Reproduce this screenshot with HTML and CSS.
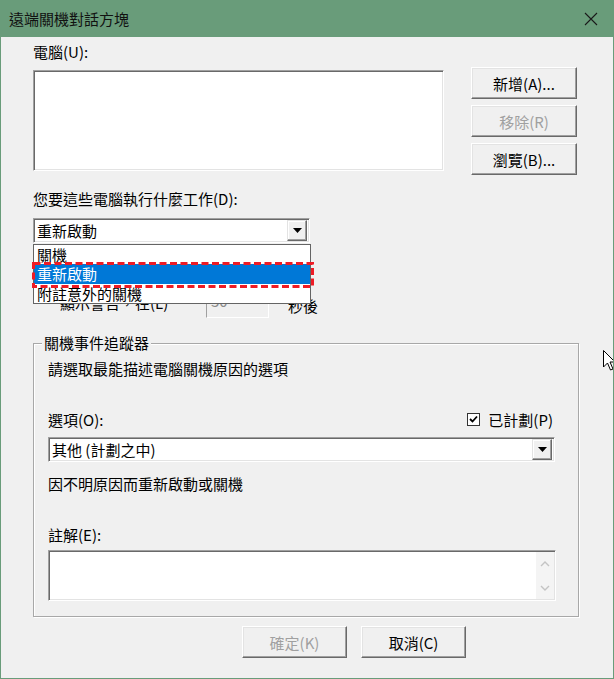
FILE: index.html
```html
<!DOCTYPE html>
<html lang="zh-Hant">
<head>
<meta charset="utf-8">
<title>遠端關機對話方塊</title>
<link rel="stylesheet" href="styles.css">
</head>
<body>
<div class="window">
  <div class="titlebar">
    <span class="title">遠端關機對話方塊</span>
    <svg class="close" width="14" height="14" viewBox="0 0 14 14"><path d="M1 1 L13 13 M13 1 L1 13" stroke="#1a1a1a" stroke-width="1.1" fill="none"/></svg>
  </div>
  <div class="content">
    <div class="label">電腦(U):</div>
    <div class="computers">
      <div class="listbox"></div>
      <div class="side-buttons">
        <button class="btn">新增(A)...</button>
        <button class="btn disabled">移除(R)</button>
        <button class="btn">瀏覽(B)...</button>
      </div>
    </div>
    <div class="label action-label">您要這些電腦執行什麼工作(D):</div>
    <div class="combo action-combo">
      <span class="combo-text">重新啟動</span>
      <span class="combo-arrow"><svg width="9" height="5" viewBox="0 0 9 5"><path d="M0 0 H9 L4.5 5 Z" fill="#000"/></svg></span>
    </div>
    <div class="warn-row">
      <span class="warn-text">顯示警告，在(L)</span>
      <div class="num-field">30</div>
      <span class="warn-unit">秒後</span>
    </div>
    <div class="group">
      <span class="group-title">關機事件追蹤器</span>
      <div class="desc">請選取最能描述電腦關機原因的選項</div>
      <div class="option-row">
        <span>選項(O):</span>
        <span class="check">
          <span class="checkbox"><svg width="9" height="9" viewBox="0 0 9 9"><path d="M1 4 L3.5 6.5 L8 1.5" stroke="#000" stroke-width="1.8" fill="none"/></svg></span>
          已計劃(P)
        </span>
      </div>
      <div class="combo reason-combo">
        <span class="combo-text">其他 (計劃之中)</span>
        <span class="combo-arrow"><svg width="9" height="5" viewBox="0 0 9 5"><path d="M0 0 H9 L4.5 5 Z" fill="#000"/></svg></span>
      </div>
      <div class="reason-desc">因不明原因而重新啟動或關機</div>
      <div class="label comment-label">註解(E):</div>
      <div class="textarea">
        <div class="text-area-body"></div>
        <div class="scrollbar">
          <svg width="10" height="6" viewBox="0 0 10 6"><path d="M1 5 L5 1 L9 5" stroke="#c4c4c4" stroke-width="1.4" fill="none"/></svg>
          <svg width="10" height="6" viewBox="0 0 10 6"><path d="M1 1 L5 5 L9 1" stroke="#c4c4c4" stroke-width="1.4" fill="none"/></svg>
        </div>
      </div>
    </div>
    <div class="footer">
      <button class="btn disabled">確定(K)</button>
      <button class="btn">取消(C)</button>
    </div>
  </div>

  <div class="dropdown">
    <div class="item">關機</div>
    <div class="item selected">重新啟動</div>
    <div class="item">附註意外的關機</div>
  </div>
  <svg class="highlight" width="282" height="26" viewBox="0 0 282 26"><rect x="1.5" y="1.5" width="279" height="23" fill="none" stroke="#ee1c25" stroke-width="3" stroke-dasharray="7 3.5"/></svg>
  <svg class="cursor" width="13" height="22" viewBox="0 0 13 22"><path d="M0.5 0.5 L0.5 17 L4.5 13 L7.5 20 L10 19 L7 12 L12 12 Z" fill="#fff" stroke="#000" stroke-width="1"/></svg>
</div>
</body>
</html>
```

FILE: styles.css
```css
* { box-sizing: border-box; }

body {
  margin: 0;
  background: #ffffff;
  font-family: "Noto Sans CJK TC", "Noto Sans", sans-serif;
  font-size: 15px;
  color: #000;
}

.window {
  position: relative;
  width: 614px;
  height: 679px;
  background: #f0f0f0;
  border-left: 1px solid #699c7a;
  border-right: 1px solid #699c7a;
  border-bottom: 1px solid #699c7a;
  overflow: hidden;
}

.titlebar {
  height: 37px;
  background: #699c7a;
  display: flex;
  align-items: center;
  justify-content: space-between;
  padding: 0 15px 0 8px;
}

.title {
  font-size: 15px;
  line-height: 20px;
  color: #111;
}

.content {
  padding: 5px 0 0 32px;
}

.label {
  line-height: 20px;
  height: 20px;
}

.computers {
  display: flex;
  align-items: flex-start;
  margin-top: 5px;
}

.listbox {
  width: 411px;
  height: 101px;
  margin-top: 3px;
  background: #fff;
  border: 1px solid;
  border-color: #a0a0a0 #ffffff #ffffff #a0a0a0;
  box-shadow: inset 1px 1px 0 #696969, inset -1px -1px 0 #e3e3e3;
}

.side-buttons {
  display: flex;
  flex-direction: column;
  gap: 6px;
  margin-left: 27px;
}

.btn {
  width: 106px;
  height: 32px;
  padding: 0;
  font: inherit;
  font-size: 15px;
  color: #000;
  background: #f0f0f0;
  border: 1px solid;
  border-color: #ffffff #696969 #696969 #ffffff;
  box-shadow: inset -1px -1px 0 #a0a0a0, inset 1px 1px 0 #e3e3e3;
  display: flex;
  align-items: center;
  justify-content: center;
}

.btn.disabled {
  color: #a0a0a0;
}

.action-label {
  margin-top: 14px;
}

.combo {
  display: flex;
  align-items: center;
  justify-content: space-between;
  height: 25px;
  background: #fff;
  border: 1px solid;
  border-color: #a0a0a0 #ffffff #ffffff #a0a0a0;
  box-shadow: inset 1px 1px 0 #696969, inset -1px -1px 0 #e3e3e3;
  padding: 0 2px 0 3px;
}

.action-combo {
  width: 277px;
  margin-top: 9px;
}

.combo-text {
  line-height: 20px;
}

.combo-arrow {
  width: 20px;
  height: 21px;
  background: #f0f0f0;
  border: 1px solid;
  border-color: #e3e3e3 #696969 #696969 #e3e3e3;
  box-shadow: inset -1px -1px 0 #a0a0a0, inset 1px 1px 0 #ffffff;
  display: flex;
  align-items: center;
  justify-content: center;
}

.warn-row {
  display: flex;
  align-items: center;
  height: 30px;
  margin-top: 45px;
  padding-left: 27px;
}

.warn-text {
  width: 146px;
  line-height: 20px;
}

.num-field {
  width: 63px;
  height: 30px;
  border: 1px solid;
  border-color: #a0a0a0 #ffffff #ffffff #a0a0a0;
  color: #8a8a8a;
  padding: 2px 0 0 4px;
  line-height: 20px;
}

.warn-unit {
  margin-left: 19px;
  margin-top: 4px;
}

.group {
  position: relative;
  width: 546px;
  height: 274px;
  margin-top: 25px;
  border: 1px solid #a8a8a8;
  box-shadow: inset 1px 1px 0 #ffffff, 1px 1px 0 #ffffff;
  padding: 15px 22px 15px 14px;
}

.group-title {
  position: absolute;
  top: -11px;
  left: 8px;
  padding: 0 2px;
  background: #f0f0f0;
  line-height: 20px;
}

.desc {
  line-height: 20px;
}

.option-row {
  display: flex;
  align-items: center;
  justify-content: space-between;
  height: 20px;
  margin-top: 30px;
}

.check {
  display: flex;
  align-items: center;
  gap: 8px;
  margin-right: 3px;
}

.checkbox {
  width: 13px;
  height: 13px;
  background: #fff;
  border: 1px solid #333;
  display: flex;
  align-items: center;
  justify-content: center;
}

.reason-combo {
  width: 507px;
  margin-top: 8px;
}

.reason-desc {
  line-height: 20px;
  margin-top: 12px;
}

.comment-label {
  margin-top: 31px;
}

.textarea {
  display: flex;
  width: 508px;
  height: 51px;
  margin-top: 5px;
  background: #fff;
  border: 1px solid;
  border-color: #a0a0a0 #ffffff #ffffff #a0a0a0;
  box-shadow: inset 1px 1px 0 #696969, inset -1px -1px 0 #e3e3e3;
  padding: 1px 1px 1px 1px;
}

.text-area-body {
  flex: 1;
}

.scrollbar {
  width: 18px;
  background: #f4f4f4;
  display: flex;
  flex-direction: column;
  align-items: center;
  justify-content: space-between;
  padding: 9px 0 8px;
}

.footer {
  display: flex;
  gap: 14px;
  margin-top: 9px;
  margin-left: 209px;
}

.footer .btn {
  width: 105px;
}

.dropdown {
  position: absolute;
  left: 32px;
  top: 244px;
  width: 278px;
  height: 60px;
  background: #fff;
  border: 1px solid #646464;
}

.item {
  height: 19px;
  line-height: 19px;
  padding-left: 3px;
}

.item.selected {
  height: 20px;
  line-height: 20px;
  background: #0078d7;
  color: #fff;
}

.highlight {
  position: absolute;
  left: 31px;
  top: 262px;
}

.cursor {
  position: absolute;
  left: 602px;
  top: 350px;
}
```
